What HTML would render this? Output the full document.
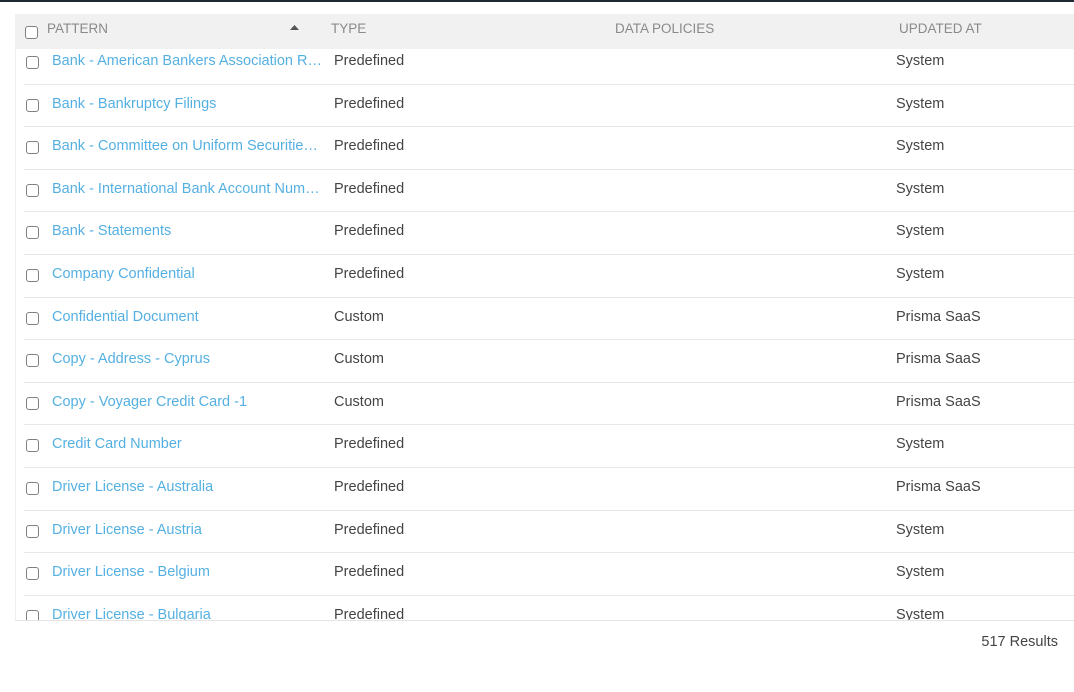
<!DOCTYPE html>
<html><head><style>
body{margin:0;width:1074px;height:692px;background:#fff;font-family:"Liberation Sans",sans-serif;position:relative;overflow:hidden}
.top{position:absolute;left:0;top:0;width:1074px;height:2px;background:#1e2a36}
.hdr{position:absolute;left:15px;top:14px;width:1059px;height:35px;background:#f1f1f1;color:#8a8a8a;font-size:13.5px;z-index:2}
.hdr span{position:absolute;top:7px}
.wrap{position:absolute;left:15px;top:14px;width:1059px;height:606px;overflow:hidden;border-left:1px solid #eee;border-bottom:1px solid #e4e4e4}
.row{position:absolute;left:8px;width:1051px;height:42.6px;border-bottom:1px solid #e8e8e8;font-size:14.5px;color:#444}
.row span{position:absolute;top:12px;white-space:nowrap}
.cb{position:absolute;width:11px;height:11px;border:1.3px solid #808080;border-radius:3px;background:#fff}
.row .cb{left:2px;top:15px}
.n{left:28px;color:#55b0e2;width:270px;overflow:hidden;text-overflow:ellipsis}
.t{left:310px}.u{left:872px}
.foot{position:absolute;right:16px;top:634px;font-size:14.5px;color:#444}
</style></head><body>
<div class="top"></div>
<div class="hdr">
<div class="cb" style="left:10px;top:12px"></div>
<span style="left:32px">PATTERN</span>
<svg style="position:absolute;left:275px;top:11px" width="9" height="6"><path d="M0 5 L4.5 0 L9 5Z" fill="#555"/></svg>
<span style="left:316px">TYPE</span>
<span style="left:600px">DATA POLICIES</span>
<span style="left:884px">UPDATED AT</span>
</div>
<div class="wrap">
<div class="row" style="top:27px"><div class="cb"></div><span class="n">Bank - American Bankers Association Routing Number</span><span class="t">Predefined</span><span class="u">System</span></div>
<div class="row" style="top:69.6px"><div class="cb"></div><span class="n">Bank - Bankruptcy Filings</span><span class="t">Predefined</span><span class="u">System</span></div>
<div class="row" style="top:112.2px"><div class="cb"></div><span class="n">Bank - Committee on Uniform Securities Identification</span><span class="t">Predefined</span><span class="u">System</span></div>
<div class="row" style="top:154.8px"><div class="cb"></div><span class="n">Bank - International Bank Account Number</span><span class="t">Predefined</span><span class="u">System</span></div>
<div class="row" style="top:197.4px"><div class="cb"></div><span class="n">Bank - Statements</span><span class="t">Predefined</span><span class="u">System</span></div>
<div class="row" style="top:240px"><div class="cb"></div><span class="n">Company Confidential</span><span class="t">Predefined</span><span class="u">System</span></div>
<div class="row" style="top:282.6px"><div class="cb"></div><span class="n">Confidential Document</span><span class="t">Custom</span><span class="u">Prisma SaaS</span></div>
<div class="row" style="top:325.2px"><div class="cb"></div><span class="n">Copy - Address - Cyprus</span><span class="t">Custom</span><span class="u">Prisma SaaS</span></div>
<div class="row" style="top:367.8px"><div class="cb"></div><span class="n">Copy - Voyager Credit Card -1</span><span class="t">Custom</span><span class="u">Prisma SaaS</span></div>
<div class="row" style="top:410.4px"><div class="cb"></div><span class="n">Credit Card Number</span><span class="t">Predefined</span><span class="u">System</span></div>
<div class="row" style="top:453px"><div class="cb"></div><span class="n">Driver License - Australia</span><span class="t">Predefined</span><span class="u">Prisma SaaS</span></div>
<div class="row" style="top:495.6px"><div class="cb"></div><span class="n">Driver License - Austria</span><span class="t">Predefined</span><span class="u">System</span></div>
<div class="row" style="top:538.2px"><div class="cb"></div><span class="n">Driver License - Belgium</span><span class="t">Predefined</span><span class="u">System</span></div>
<div class="row" style="top:580.8px"><div class="cb"></div><span class="n">Driver License - Bulgaria</span><span class="t">Predefined</span><span class="u">System</span></div>
</div>
<div class="foot">517 Results</div>
</body></html>
